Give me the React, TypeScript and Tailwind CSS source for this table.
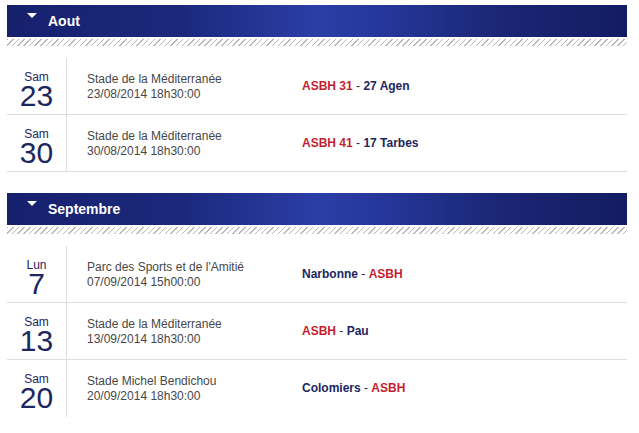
import React from "react";

type Match = {
  day: string;
  num: string;
  venue: string;
  date: string;
  home: string;
  away: string;
  homeScore?: string;
  awayScore?: string;
};

type Month = {
  name: string;
  matches: Match[];
};

const months: Month[] = [
  {
    name: "Aout",
    matches: [
      { day: "Sam", num: "23", venue: "Stade de la Méditerranée", date: "23/08/2014 18h30:00", home: "ASBH", away: "Agen", homeScore: "31", awayScore: "27" },
      { day: "Sam", num: "30", venue: "Stade de la Méditerranée", date: "30/08/2014 18h30:00", home: "ASBH", away: "Tarbes", homeScore: "41", awayScore: "17" },
    ],
  },
  {
    name: "Septembre",
    matches: [
      { day: "Lun", num: "7", venue: "Parc des Sports et de l'Amitié", date: "07/09/2014 15h00:00", home: "Narbonne", away: "ASBH" },
      { day: "Sam", num: "13", venue: "Stade de la Méditerranée", date: "13/09/2014 18h30:00", home: "ASBH", away: "Pau" },
      { day: "Sam", num: "20", venue: "Stade Michel Bendichou", date: "20/09/2014 18h30:00", home: "Colomiers", away: "ASBH" },
    ],
  },
];

const teamClass = (team: string) =>
  team === "ASBH" ? "text-[#c41f30]" : "text-[#1c2660]";

const MatchRow: React.FC<{ match: Match; last: boolean }> = ({ match, last }) => (
  <div className={`flex h-[57px] ${last ? "" : "border-b border-[#dedede]"}`}>
    <div className="flex w-[60px] flex-col items-center border-r border-[#dedede] pt-[13px] text-[#1c2660]">
      <span className="text-[12px] leading-[13px]">{match.day}</span>
      <span className="text-[30px] leading-[24px]">{match.num}</span>
    </div>
    <div className="w-[235px] pl-[20px] pt-[14px] text-[12px] leading-[15px] text-[#474747]">
      <div>{match.venue}</div>
      <div>{match.date}</div>
    </div>
    <div className="flex items-center text-[12px] leading-[15px]">
      <span className={`font-bold ${teamClass(match.home)}`}>
        {match.home}
        {match.homeScore ? ` ${match.homeScore}` : ""}
      </span>
      <span className="whitespace-pre text-[#1c2660]"> - </span>
      <span className={`font-bold ${teamClass(match.away)}`}>
        {match.awayScore ? `${match.awayScore} ` : ""}
        {match.away}
      </span>
    </div>
  </div>
);

const MonthSection: React.FC<{ month: Month; first: boolean; lastSection: boolean }> = ({
  month,
  first,
  lastSection,
}) => (
  <div className={first ? "" : "mt-[21px]"}>
    <div className="flex h-8 items-center bg-[#18236f] bg-[linear-gradient(to_right,#16216d_0%,#1b287c_28%,#2b3ea6_50%,#25379a_60%,#1a2674_80%,#131c62_100%)] pl-[20px]">
      <div className="mt-[8px] h-0 w-0 self-start border-x-[5px] border-t-[5px] border-x-transparent border-t-white" />
      <span className="ml-[11px] pt-px text-[14px] font-bold text-white">{month.name}</span>
    </div>
    <div className="mt-[2px] h-[7px] [background-image:repeating-linear-gradient(135deg,#b8b8b8_0px,#b8b8b8_1px,transparent_1px,transparent_4px)]" />
    <div className="mt-[12px]">
      {month.matches.map((m, i) => (
        <MatchRow
          key={m.date}
          match={m}
          last={lastSection && i === month.matches.length - 1}
        />
      ))}
    </div>
  </div>
);

export default function App() {
  return (
    <div className="min-h-screen bg-white pl-[7px] pt-[5px] font-['Liberation_Sans',Arial,sans-serif]">
      <div className="w-[620px]">
        {months.map((m, i) => (
          <MonthSection
            key={m.name}
            month={m}
            first={i === 0}
            lastSection={i === months.length - 1}
          />
        ))}
      </div>
    </div>
  );
}
